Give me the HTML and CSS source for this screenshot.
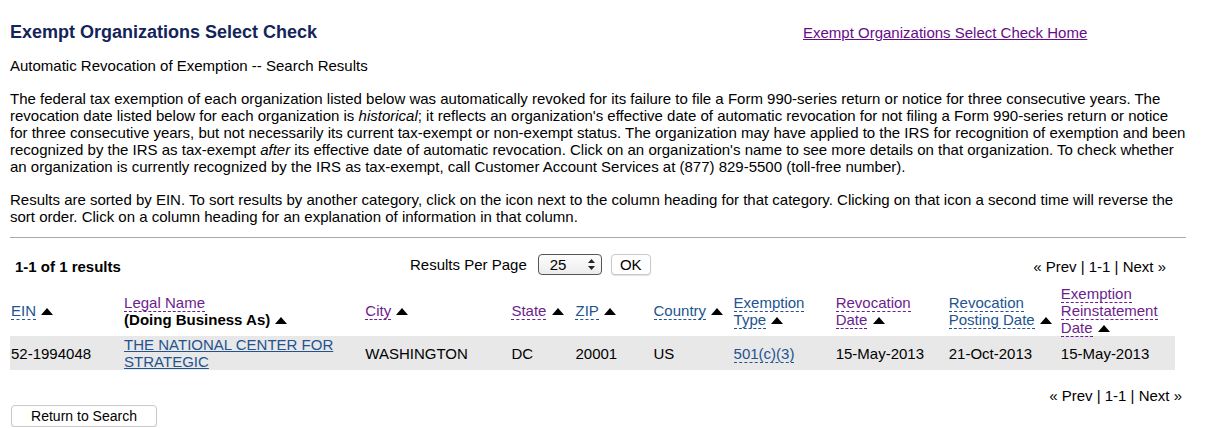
FILE: index.html
```html
<!DOCTYPE html>
<html>
<head>
<meta charset="utf-8">
<link rel="stylesheet" href="styles.css">
</head>
<body>
<div class="page">
  <div class="top">
    <h1 class="title">Exempt Organizations Select Check</h1>
    <a class="home" href="#">Exempt Organizations Select Check Home</a>
  </div>
  <p class="sub">Automatic Revocation of Exemption -- Search Results</p>
  <p class="para">The federal tax exemption of each organization listed below was automatically revoked for its failure to file a Form 990-series return or notice for three consecutive years. The revocation date listed below for each organization is <i>historical</i>; it reflects an organization's effective date of automatic revocation for not filing a Form 990-series return or notice for three consecutive years, but not necessarily its current tax-exempt or non-exempt status. The organization may have applied to the IRS for recognition of exemption and been recognized by the IRS as tax-exempt <i>after</i> its effective date of automatic revocation. Click on an organization's name to see more details on that organization. To check whether an organization is currently recognized by the IRS as tax-exempt, call Customer Account Services at (877) 829-5500 (toll-free number).</p>
  <p class="para p2">Results are sorted by EIN. To sort results by another category, click on the icon next to the column heading for that category. Clicking on that icon a second time will reverse the sort order. Click on a column heading for an explanation of information in that column.</p>
  <hr class="rule">
  <div class="bar">
    <div class="count">1-1 of 1 results</div>
    <div class="perpage">
      <span>Results Per Page</span>
      <span class="select">25<svg width="7" height="11" viewBox="0 0 7 11"><path d="M3.5 0 L7 4 H0 Z M3.5 11 L0 7 H7 Z" fill="#222"/></svg></span>
      <span class="btn ok">OK</span>
    </div>
    <div class="pager">« Prev | 1-1 | Next »</div>
  </div>
  <table class="results">
    <colgroup>
      <col style="width:113px"><col style="width:241px"><col style="width:146px"><col style="width:64px"><col style="width:78px"><col style="width:80px"><col style="width:102px"><col style="width:113px"><col style="width:112px"><col style="width:115px">
    </colgroup>
    <thead>
      <tr>
        <th><span class="h blue">EIN</span> <span class="tri"></span></th>
        <th><span class="h purple">Legal Name</span><br><b>(Doing Business As)</b> <span class="tri"></span></th>
        <th><span class="h purple">City</span> <span class="tri"></span></th>
        <th><span class="h purple">State</span> <span class="tri"></span></th>
        <th><span class="h blue">ZIP</span> <span class="tri"></span></th>
        <th><span class="h blue">Country</span> <span class="tri"></span></th>
        <th><span class="h blue">Exemption</span><br><span class="h blue">Type</span> <span class="tri"></span></th>
        <th><span class="h purple">Revocation</span><br><span class="h purple">Date</span> <span class="tri"></span></th>
        <th><span class="h blue">Revocation</span><br><span class="h blue">Posting Date</span> <span class="tri"></span></th>
        <th><span class="h purple">Exemption</span><br><span class="h purple">Reinstatement</span><br><span class="h purple">Date</span> <span class="tri"></span></th>
      </tr>
    </thead>
    <tbody>
      <tr class="row">
        <td>52-1994048</td>
        <td><a class="org" href="#">THE NATIONAL CENTER FOR STRATEGIC</a></td>
        <td>WASHINGTON</td>
        <td>DC</td>
        <td>20001</td>
        <td>US</td>
        <td><span class="h blue">501(c)(3)</span></td>
        <td>15-May-2013</td>
        <td>21-Oct-2013</td>
        <td>15-May-2013</td>
      </tr>
    </tbody>
  </table>
  <div class="pager bottom">« Prev | 1-1 | Next »</div>
  <span class="btn ret">Return to Search</span>
</div>
</body>
</html>
```
FILE: styles.css
```css
html, body {
  margin: 0;
  padding: 0;
  background: #fff;
}
body {
  font-family: "Liberation Sans", Arial, sans-serif;
  font-size: 15px;
  color: #000;
}
.page {
  padding: 0 10px;
  width: 1176px;
}
.top {
  display: flex;
  align-items: baseline;
  padding-top: 22px;
}
.title {
  margin: 0;
  font-size: 18px;
  line-height: 21px;
  font-weight: bold;
  color: #14245a;
  width: 793px;
}
.home {
  color: #660b8a;
}
.sub {
  margin: 14px 0 0;
  line-height: 17px;
}
.para {
  margin: 16px 0 0;
  line-height: 17px;
}
.p2 {
  margin-top: 16px;
}
.rule {
  border: 0;
  border-top: 1px solid #aaa;
  margin: 12px 0 0;
  height: 0;
}
.bar {
  display: flex;
  align-items: flex-start;
  height: 47px;
}
.count {
  font-weight: bold;
  padding-left: 5px;
  width: 395px;
  padding-top: 20px;
  line-height: 17px;
}
.perpage {
  display: flex;
  align-items: center;
  flex: 1;
  padding-top: 16px;
}
.select {
  display: inline-flex;
  align-items: center;
  justify-content: space-between;
  width: 64px;
  height: 21px;
  box-sizing: border-box;
  border: 1px solid #555;
  border-radius: 4px;
  padding: 0 6px 0 11px;
  margin-left: 11px;
  background: linear-gradient(#fdfdfd, #ececec);
}
.btn {
  display: inline-flex;
  align-items: center;
  justify-content: center;
  box-sizing: border-box;
  border: 1px solid #c9c9c9;
  border-radius: 4px;
  background: #fff;
  box-shadow: 0 1px 1px rgba(0,0,0,0.12);
}
.ok {
  width: 40px;
  height: 21px;
  margin-left: 9px;
}
.pager {
  padding-right: 20px;
  padding-top: 20px;
  line-height: 17px;
}
.results {
  border-collapse: collapse;
  table-layout: fixed;
  width: 1165px;
}
.results th {
  font-weight: normal;
  text-align: left;
  vertical-align: middle;
  padding: 0 1px;
  line-height: 17px;
}
.results td {
  padding: 0 1px;
  line-height: 17px;
  vertical-align: middle;
}
.row {
  background: #e8e8e8;
}
.h {
  border-bottom: 1px dashed currentColor;
}
.blue { color: #23538f; }
.purple { color: #6b1e8c; }
.tri {
  display: inline-block;
  width: 0;
  height: 0;
  border-left: 6px solid transparent;
  border-right: 6px solid transparent;
  border-bottom: 7px solid #000;
  vertical-align: 1px;
  margin-left: 1px;
}
.org {
  color: #23538f;
}
.bottom {
  text-align: right;
  padding-right: 4px;
  padding-top: 17px;
}
.ret {
  width: 146px;
  height: 22px;
  margin-top: 1px;
  margin-left: 1px;
  font-size: 14px;
}
```
